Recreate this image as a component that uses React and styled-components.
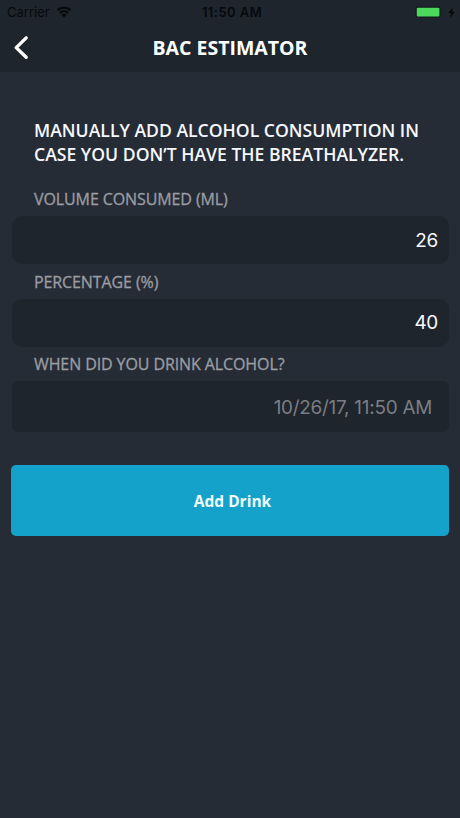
import styled, { createGlobalStyle } from 'styled-components'

const GlobalStyle = createGlobalStyle`
  * {
    margin: 0;
    padding: 0;
    box-sizing: border-box;
  }

  body {
    background-color: #262c35;
    font-family: 'Open Sans', 'Noto Sans', sans-serif;
  }
`;

const Screen = styled.main`
  width: 100%;
  min-height: 100vh;
  background-color: #262c35;
  color: #f5f8ff;
`

const Header = styled.header`
  height: 72px;
  background-color: #1f252c;
`

const StatusBar = styled.div`
  display: grid;
  grid-template-columns: 1fr auto 1fr;
  align-items: center;
  height: 24px;
  padding: 0 5px 0 7px;
  color: #06090c;
  font-family: Inter, 'Liberation Sans', sans-serif;
  font-size: 13px;
  line-height: 24px;
`

const StatusGroup = styled.div`
  display: flex;
  align-items: center;
  justify-content: ${({end}) => (end ? 'flex-end' : 'flex-start')};
  gap: ${({end}) => (end ? '4px' : '6.5px')};
`

const Clock = styled.span`
  margin-left: 2px;
  font-weight: 600;
  letter-spacing: 0.45px;
`

const NavBar = styled.nav`
  display: grid;
  grid-template-columns: 44px 1fr 44px;
  align-items: center;
  height: 47px;
`

const BackButton = styled.button`
  display: flex;
  align-items: center;
  height: 47px;
  padding-left: 13px;
  border: none;
  background: none;
  cursor: pointer;
`

const Title = styled.h1`
  text-align: center;
  white-space: nowrap;
  color: #fcffff;
  font-size: 19.5px;
  font-weight: 700;
  line-height: 26px;
`

const Form = styled.form`
  padding: 46px 11px 0 12px;
`

const Intro = styled.p`
  margin: 0 0 21px 22px;
  white-space: nowrap;
  font-size: 17.6px;
  font-weight: 600;
  line-height: 24px;
`

const Label = styled.h2`
  height: 24px;
  margin-left: 22px;
  white-space: nowrap;
  color: #9a9da4;
  font-size: 16px;
  font-weight: 400;
  letter-spacing: -0.1px;
  line-height: 24px;
  -webkit-text-stroke: 0.3px #9a9da4;
`

const Field = styled.div`
  display: flex;
  align-items: center;
  justify-content: flex-end;
  height: ${({date}) => (date ? '51px' : '48px')};
  margin: 5px 0 ${({date}) => (date ? '33px' : '5.5px')};
  padding: ${({date}) => (date ? '1px 17px 0 0' : '0 11px 0 0')};
  border-radius: ${({date}) => (date ? '6px' : '10px')};
  background-color: #1f252c;
  color: ${({date}) => (date ? '#7a7e84' : '#f8fbff')};
  font-family: Inter, 'Liberation Sans', sans-serif;
  font-size: 18.9px;
  letter-spacing: -0.25px;
`

const AddButton = styled.button`
  display: block;
  width: 438px;
  height: 71px;
  margin-left: -1px;
  padding-left: 5px;
  border: none;
  border-radius: 5px;
  background-color: #15a2ca;
  color: #f0fdff;
  font-family: inherit;
  font-size: 15.5px;
  font-weight: 700;
  cursor: pointer;
`

function WifiIcon() {
  return (
    <svg width="16" height="12" viewBox="0 0 15 12" fill="none" stroke="#06090c" strokeWidth="2.2">
      <path d="M0.9 4.2A9.5 9.5 0 0 1 14.1 4.2" />
      <path d="M3.4 6.9A5.9 5.9 0 0 1 11.6 6.9" />
      <path d="M7.5 11.5L5 9A3.5 3.5 0 0 1 10 9Z" fill="#06090c" stroke="none" />
    </svg>
  )
}

function BatteryIcon() {
  return (
    <svg width="29" height="12" viewBox="0 0 29 12">
      <rect x="0.5" y="0.5" width="25" height="11" rx="2.5" fill="#151d1f" stroke="#182023" />
      <rect x="1.8" y="1.8" width="22.6" height="8.6" rx="1" fill="#4cd75d" />
      <path d="M27 4Q29 6 27 8Z" fill="#182023" />
    </svg>
  )
}

function BoltIcon() {
  return (
    <svg width="7" height="11" viewBox="0 0 7 11">
      <path d="M5 0L0.2 6.1H3L1.9 11L6.8 4.7H4Z" fill="#06090c" />
    </svg>
  )
}

function BackIcon() {
  return (
    <svg width="16" height="26" viewBox="0 0 16 26" fill="none">
      <path d="M13.2 2.9L3.2 12.6L13.2 22.3" stroke="#fff" strokeWidth="3.4" strokeLinecap="round" strokeLinejoin="round" />
    </svg>
  )
}

function App() {
  return (
    <Screen>
      <GlobalStyle/>
      <Header>
        <StatusBar>
          <StatusGroup>
            <span>Carrier</span>
            <WifiIcon/>
          </StatusGroup>
          <Clock>11:50 AM</Clock>
          <StatusGroup end={true}>
            <BatteryIcon/>
            <BoltIcon/>
          </StatusGroup>
        </StatusBar>
        <NavBar>
          <BackButton type="button" aria-label="Back"><BackIcon/></BackButton>
          <Title>BAC ESTIMATOR</Title>
        </NavBar>
      </Header>

      <Form>
        <Intro>
          MANUALLY ADD ALCOHOL CONSUMPTION IN<br/>
          CASE YOU DON’T HAVE THE BREATHALYZER.
        </Intro>

        <Label>VOLUME CONSUMED (ML)</Label>
        <Field>26</Field>

        <Label>PERCENTAGE (%)</Label>
        <Field>40</Field>

        <Label>WHEN DID YOU DRINK ALCOHOL?</Label>
        <Field date={true}>10/26/17, 11:50 AM</Field>

        <AddButton type="button">Add Drink</AddButton>
      </Form>
    </Screen>
  )
}

export default App
